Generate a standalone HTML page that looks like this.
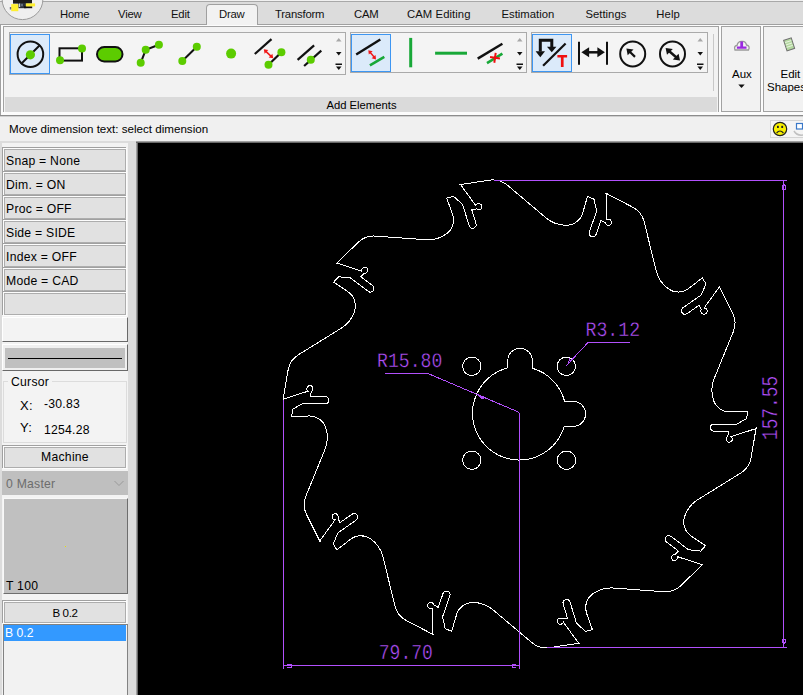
<!DOCTYPE html>
<html>
<head>
<meta charset="utf-8">
<title>CAD</title>
<style>
*{box-sizing:border-box;margin:0;padding:0}
html,body{width:803px;height:695px;overflow:hidden;background:#f0f0f0;font-family:"Liberation Sans",sans-serif;color:#000}
.abs{position:absolute}
#root{position:relative;width:803px;height:695px;overflow:hidden;background:#f0f0f0}
/* tab bar */
#tabbar{left:0;top:0;width:803px;height:25px;background:#dcdcdc;border-bottom:1px solid #a0a0a0;border-top:1px solid #f0f0f0;box-shadow:inset 0 1px 0 #a8a8a8}
.tab{position:absolute;top:7px;font-size:11.3px;letter-spacing:-0.2px;line-height:14px;white-space:nowrap;color:#111}
#drawtab{left:206px;top:4px;width:52px;height:22px;background:#f2f2f2;border:1px solid #a0a0a0;border-bottom:none;border-radius:4px 4px 0 0}
/* ribbon */
#ribbon{left:0;top:25px;width:803px;height:90px;background:#fcfcfc;border-left:1px solid #a0a0a0}
.panel{position:absolute;border:1px solid #a2a2a2;border-bottom:none;background:#f2f2f2}
.gal{position:absolute;border:1px solid #aaaaaa;background:#f4f4f4}
.sel{position:absolute;background:#dbeafa;border:1px solid #3d96f2}
.lbl{position:absolute;background:#dadada;font-size:11.25px;line-height:16px;text-align:center;overflow:hidden;padding-left:1px}
/* left panel */
.btn{position:absolute;left:4px;width:122px;height:22px;border:1px solid #adadad;background:#e1e1e1;font-size:12.2px;letter-spacing:0.25px;line-height:15px;padding:4px 0 0 1px;white-space:nowrap;box-shadow:0 0 0 1px #fdfdfd,-1px -1px 0 1px #a0a0a0}
.t{position:absolute;white-space:nowrap;font-size:12.2px;letter-spacing:0.25px;line-height:15px}
</style>
</head>
<body>
<div id="root">

<!-- TAB BAR -->
<div id="tabbar" class="abs"></div>
<div id="drawtab" class="abs"></div>
<div class="tab" style="left:60px">Home</div>
<div class="tab" style="left:118px">View</div>
<div class="tab" style="left:171px">Edit</div>
<div class="tab" style="left:219px">Draw</div>
<div class="tab" style="left:275px">Transform</div>
<div class="tab" style="left:354px">CAM</div>
<div class="tab" style="left:407px;letter-spacing:0.07px">CAM Editing</div>
<div class="tab" style="left:501.500px;letter-spacing:0">Estimation</div>
<div class="tab" style="left:585.500px;letter-spacing:0">Settings</div>
<div class="tab" style="left:656.300px;letter-spacing:0.07px">Help</div>

<!-- RIBBON -->
<div id="ribbon" class="abs"></div>
<div class="panel" style="left:3px;top:26px;width:716px;height:86px"></div>
<div class="lbl" style="left:5px;top:97px;width:712px;height:15px">Add Elements</div>
<div class="panel" style="left:721px;top:26px;width:40px;height:86px;border-bottom:1px solid #a2a2a2"></div>
<div class="panel" style="left:763px;top:26px;width:60px;height:86px;border-bottom:1px solid #a2a2a2"></div>
<div class="gal" style="left:9px;top:32px;width:337px;height:43px"></div>
<div class="gal" style="left:350px;top:32px;width:177px;height:41px"></div>
<div class="gal" style="left:531px;top:32px;width:177px;height:41px"></div>
<div class="sel" style="left:10px;top:34px;width:40px;height:40px"></div>
<div class="sel" style="left:351px;top:34px;width:40px;height:38px"></div>
<div class="sel" style="left:532px;top:34px;width:40px;height:38px"></div>
<div class="abs" style="left:713px;top:34px;width:1px;height:57px;background:#c8c8c8"></div>
<div class="abs" style="left:0;top:115px;width:803px;height:1px;background:#8c8c8c"></div><div class="abs" style="left:0;top:116px;width:803px;height:1px;background:#cfcfcf"></div>
<div class="abs" style="left:1px;top:112px;width:802px;height:3px;background:#fcfcfc"></div>

<svg class="abs" id="icons" style="left:0;top:0" width="803" height="140" viewBox="0 0 803 140">
<!-- app button -->
<circle cx="22.5" cy="-0.8" r="20.4" fill="#efefef" stroke="#9c9c9c" stroke-width="1"/>
<g>
<rect x="13" y="0" width="19" height="3.600" fill="#1c1c1c"/>
<rect x="18.300" y="3" width="8" height="5.200" fill="#2a3038"/>
<rect x="24" y="6.200" width="8.200" height="2" fill="#111"/>
<rect x="11.200" y="4.100" width="7.100" height="7.100" fill="#fff030"/>
<rect x="25.800" y="3.400" width="9.300" height="3" fill="#fff030"/>
<rect x="19" y="3.500" width="1.200" height="3.500" fill="#c8d4e0"/>
<rect x="21.500" y="3.800" width="1" height="2.500" fill="#9ab"/>
<rect x="9.800" y="7" width="1.400" height="2.500" fill="#667"/>
</g>
<!-- gallery 1 -->
<g fill="none" stroke="#111" stroke-width="2" stroke-linecap="butt">
<circle cx="30.4" cy="54.2" r="12.8"/>
<path d="M21 64 L40 45"/>
<rect x="59.500" y="48.300" width="22.500" height="12.300"/>
<path d="M140.700 62.800 L145.700 49.800 L158.900 44.800"/>
<path d="M182.300 61 L196.800 46.800"/>
<path d="M254.800 54 L271.500 39.100" stroke-width="2.2"/>
<path d="M268.500 64.800 L281.400 52.300" stroke-width="2.2"/>
<path d="M297.600 59.800 L314.100 45.300" stroke-width="2.2"/>
<path d="M304.100 66 L321.300 50.600" stroke-width="2.2"/>
</g>
<rect x="97" y="47" width="25.500" height="14.500" rx="7.250" fill="#5ccc00" stroke="#111" stroke-width="2"/>
<g fill="#5ccc00">
<circle cx="30.400" cy="54.800" r="4.600"/>
<circle cx="82" cy="48.600" r="4"/>
<circle cx="60" cy="60.300" r="4"/>
<circle cx="140.700" cy="62.800" r="4"/>
<circle cx="145.700" cy="49.800" r="4"/>
<circle cx="158.900" cy="44.800" r="4"/>
<circle cx="182.300" cy="61" r="4"/>
<circle cx="196.800" cy="46.800" r="4"/>
<circle cx="231.100" cy="53.600" r="5"/>
<circle cx="268.500" cy="64.800" r="4"/>
<circle cx="281.400" cy="52.300" r="4"/>
<circle cx="310.800" cy="59.800" r="4"/>
</g>
<g stroke="#f01818" stroke-width="1.6" fill="#f01818">
<path d="M265.300 50.800 L271.700 56.800"/>
<path d="M263.800 49.300 L268.300 50 L264.600 53.800 Z" stroke="none"/>
<path d="M273.200 58.300 L268.700 57.600 L272.400 53.800 Z" stroke="none"/>
</g>
<!-- scroll arrows g1 -->
<g fill="#111">
<path d="M336 41.500 L341.500 41.500 L338.750 38 Z" fill="#a8a8a8"/>
<path d="M336 52 L341.500 52 L338.750 55.500 Z"/>
<path d="M335.500 63.500 h6.500 v1.500 h-6.500 Z"/>
<path d="M336 66.500 L341.500 66.500 L338.750 70 Z"/>
<path d="M517 41.500 L522.500 41.500 L519.750 38 Z" fill="#a8a8a8"/>
<path d="M517 52 L522.500 52 L519.750 55.500 Z"/>
<path d="M516.500 63.500 h6.500 v1.500 h-6.500 Z"/>
<path d="M517 66.500 L522.500 66.500 L519.750 70 Z"/>
<path d="M697.500 41.500 L703 41.500 L700.250 38 Z" fill="#a8a8a8"/>
<path d="M697.500 52 L703 52 L700.250 55.500 Z"/>
<path d="M697 63.500 h6.500 v1.500 h-6.500 Z"/>
<path d="M697.500 66.500 L703 66.500 L700.250 70 Z"/>
</g>
<!-- gallery 2 -->
<g fill="none" stroke-width="2.4">
<path d="M356.200 54.400 L380.300 39.400" stroke="#111"/>
<path d="M369.900 65.300 L384.300 56.900" stroke="#18a838" stroke-width="2.6"/>
<path d="M410.700 37.900 L410.700 67.300" stroke="#18a838" stroke-width="3"/>
<path d="M435.100 53.200 L467 53.200" stroke="#18a838" stroke-width="3"/>
<path d="M477.700 58.600 L502.400 43.700" stroke="#111"/>
<path d="M487 63.100 L502.400 53.600" stroke="#18a838" stroke-width="2.6"/>
<path d="M490 57.800 L500 57.800 M495 52.800 L495 62.800 " stroke="#f01010" stroke-width="2" transform="rotate(8 495 57.800)"/>
</g>
<g stroke="#f01818" stroke-width="1.500" fill="#f01818">
<path d="M369.600 51.800 L374.800 57.800"/>
<path d="M368.300 50.200 L372.700 51.300 L368.800 54.600 Z" stroke="none"/>
<path d="M376 59.400 L371.600 58.300 L375.500 55 Z" stroke="none"/>
</g>
<!-- gallery 3 -->
<g fill="none" stroke="#111" stroke-width="2.4">
<path d="M540.300 51.500 L540.300 40.300 L551.800 40.300 L551.800 47" stroke-width="3" stroke-linejoin="miter"/>
<path d="M543.100 65.700 L565.600 43.500" stroke-width="2.2"/>
<path d="M579 41.800 L579 64.800" stroke-width="2"/>
<path d="M607 41.800 L607 64.800" stroke-width="2"/>
<path d="M587 52.300 L600 52.300" stroke-width="2.5"/>
<circle cx="632.700" cy="53.900" r="12.500" stroke-width="2"/>
<circle cx="672.500" cy="53.900" r="12.500" stroke-width="2"/>
<path d="M635 56.900 L629.500 51.500" stroke-width="2.2"/>
<path d="M669 51 L676.500 57.500" stroke-width="2.4"/>
</g>
<g fill="#111">
<path d="M535.600 51.200 L545 51.200 L540.300 57.200 Z"/>
<path d="M547 46.700 L556.400 46.700 L551.800 52.200 Z"/>
<path d="M581.400 52.300 L589.100 47.300 L589.100 57.300 Z"/>
<path d="M604.900 52.300 L597.400 47.300 L597.400 57.300 Z"/>
<path d="M626.400 48.500 L633.500 49.500 L627.700 55.300 Z"/>
<path d="M665.600 48 L672.800 49 L667 54.800 Z"/>
<path d="M680 60.500 L672.800 59.500 L678.600 53.700 Z"/>
</g>
<path d="M557.400 54.900 h9.700 v2.600 h-3.500 v9.400 h-2.700 v-9.400 h-3.500 Z" fill="#f01010"/>
<!-- Aux icon -->
<g>
<path d="M735 50 q-1.500 -4 2 -4.500 q1 -4.500 5 -4 q3.500 -0.500 4.500 3.500 q4 1 2 5 Z" fill="#f4f4f4" stroke="#9a9a9a" stroke-width="1.300"/>
<path d="M740.300 41.500 h2.800 v5 h3.400 v2.300 h-9.600 v-2.300 h3.400 Z" fill="#9a28e0"/>
</g>
<path d="M738.300 84.500 L744.700 84.500 L741.500 88 Z" fill="#111"/>
<!-- Edit shapes icon -->
<g transform="rotate(-18 789 45)">
<rect x="785.300" y="39" width="8" height="11" fill="#b4d8a0" stroke="#707070" stroke-width="1"/>
<path d="M786 41.500 h6.500 M786 44 h6.500 M786 46.500 h6.500" stroke="#e8f4e0" stroke-width="0.900"/>
</g>
<!-- smiley area -->
<rect x="770.500" y="120.500" width="40" height="17" fill="#f4f4f4" stroke="#d4d4d4"/>
<circle cx="780" cy="129" r="6.700" fill="#f8f000" stroke="#222" stroke-width="1.200"/>
<rect x="777" y="125.800" width="1.800" height="2.200" fill="#222"/>
<rect x="781.300" y="125.800" width="1.800" height="2.200" fill="#222"/>
<path d="M776.600 133 Q780 129 783.400 133" fill="none" stroke="#222" stroke-width="1.200"/>
<rect x="796.500" y="123.500" width="6" height="5.500" fill="#fff" stroke="#3a78c8" stroke-width="1.200"/>
<path d="M794 131 q3 5 9 4" fill="none" stroke="#c0c0c0" stroke-width="1.500"/>
</svg>

<div class="t" style="left:732px;top:66.5px;font-size:11.5px;letter-spacing:0">Aux</div>
<div class="t" style="left:780.5px;top:66.5px;font-size:11.5px;letter-spacing:0">Edit</div>
<div class="t" style="left:767px;top:80px;font-size:11.5px;letter-spacing:0">Shapes</div>

<!-- STATUS -->
<div class="t" style="left:9px;top:121px;font-size:11.6px;letter-spacing:0">Move dimension text: select dimension</div>

<!-- LEFT PANEL -->
<div class="abs" style="left:0;top:142px;width:138px;height:553px;background:#f3f3f3"></div>
<div class="abs" style="left:128px;top:141px;width:8px;height:554px;background:#dcdcdc"></div>
<div class="abs" style="left:0;top:141px;width:803px;height:2px;background:#dcdcdc"></div><div class="abs" style="left:0;top:143px;width:2px;height:552px;background:#dcdcdc"></div><div class="abs" style="left:136px;top:141px;width:2px;height:554px;background:#696969;border-left:1px solid #a0a0a0"></div>
<div class="abs" style="left:136px;top:141px;width:667px;height:2px;background:#696969;border-top:1px solid #a0a0a0"></div>

<div class="btn" style="top:149px">Snap = None</div>
<div class="btn" style="top:173px">Dim. = ON</div>
<div class="btn" style="top:197px">Proc = OFF</div>
<div class="btn" style="top:221px">Side = SIDE</div>
<div class="btn" style="top:245px">Index = OFF</div>
<div class="btn" style="top:269px">Mode = CAD</div>
<div class="btn" style="top:293px"></div>

<div class="abs" style="left:2px;top:317px;width:126px;height:25px;background:#f3f3f3;border-right:1px solid #696969;border-bottom:1px solid #696969;border-top:1px solid #fff;border-left:1px solid #fff"></div>
<div class="abs" style="left:2px;top:344px;width:126px;height:27px;background:#f0f0f0;border-right:1px solid #696969;border-bottom:1px solid #696969;border-top:1px solid #fff;border-left:1px solid #fff"></div>
<div class="abs" style="left:5px;top:348px;width:120px;height:20px;background:#c0c0c0"></div>
<div class="abs" style="left:8px;top:358px;width:114px;height:1px;background:#000"></div>

<!-- cursor group -->
<div class="abs" style="left:3px;top:381px;width:124px;height:62px;border:1px solid #dcdcdc"></div>
<div class="t" style="left:8px;top:375px;background:#f3f3f3;padding:0 3px">Cursor</div>
<div class="t" style="left:20px;top:398px;font-size:13px">X:</div>
<div class="t" style="left:44px;top:397px">-30.83</div>
<div class="t" style="left:20px;top:420px;font-size:13px">Y:</div>
<div class="t" style="left:44px;top:423px">1254.28</div>

<div class="btn" style="top:447px;height:21px;text-align:center;padding-left:0;padding-top:2px">Machine</div>
<div class="abs" style="left:2px;top:471px;width:126px;height:24px;background:#bfbfbf"></div>
<div class="t" style="left:6px;top:477px;color:#6d6d6d">0 Master</div>
<svg class="abs" style="left:112px;top:478px" width="14" height="10"><path d="M2.5 3 L7 7.5 L11.5 3" fill="none" stroke="#9a9a9a" stroke-width="1"/></svg>

<div class="abs" style="left:3px;top:498px;width:125px;height:96px;background:#c0c0c0;border-top:1px solid #f8f8f8;border-left:1px solid #f8f8f8;border-right:1px solid #6e6e6e;border-bottom:1px solid #6e6e6e"></div>
<div class="abs" style="left:65px;top:546px;width:1px;height:1px;background:#e8e000"></div>
<div class="t" style="left:6px;top:579px">T 100</div>

<div class="btn" style="top:602px;height:21px;text-align:center;padding-left:0;padding-top:2px;font-size:11.6px;letter-spacing:-0.4px">B 0.2</div>
<div class="abs" style="left:3px;top:624px;width:125px;height:80px;background:#f2f2f2;border:1px solid #828282"></div>
<div class="abs" style="left:4px;top:625px;width:122px;height:16px;background:#3399ff"></div>
<div class="t" style="left:5px;top:626px;color:#fff;font-size:12.2px;letter-spacing:0">B 0.2</div>

<!-- CANVAS -->
<svg class="abs" id="cv" style="left:138px;top:143px;background:#000" width="665" height="552" viewBox="138 143 665 552" shape-rendering="crispEdges">
<defs>
<path id="tooth" fill="none" stroke="#fff" stroke-width="1" d="M459.3 184.7 L489.6 180.2 A22.5 22.5 0 0 1 507.5 185.3 L545.8 217.65 A31.5 31.5 0 0 0 566.36 225.27 A17 17 0 0 0 582.7 213 L587.5 196.4 L594.1 199.3 L596.6 211.1 L589.25 232.35 A3.6 3.6 0 0 0 596.2 234.2 L601 220.4 L605.3 222.8 A3.1 3.1 0 1 0 606.6 219.7 L606.6 193.4"/>
</defs>
<g id="blade">
<use href="#tooth"/>
<use href="#tooth" transform="rotate(36 519.6 413.9)"/>
<use href="#tooth" transform="rotate(72 519.6 413.9)"/>
<use href="#tooth" transform="rotate(108 519.6 413.9)"/>
<use href="#tooth" transform="rotate(144 519.6 413.9)"/>
<use href="#tooth" transform="rotate(180 519.6 413.9)"/>
<use href="#tooth" transform="rotate(216 519.6 413.9)"/>
<use href="#tooth" transform="rotate(252 519.6 413.9)"/>
<use href="#tooth" transform="rotate(288 519.6 413.9)"/>
<use href="#tooth" transform="rotate(324 519.6 413.9)"/>
</g>
<!-- centre hole with keyways -->
<g fill="none" stroke="#fff" stroke-width="1">
<circle cx="471.8" cy="366.3" r="9.2"/>
<circle cx="566.3" cy="366.3" r="9.2"/>
<circle cx="471.8" cy="460.2" r="9.2"/>
<circle cx="566.5" cy="460.2" r="9.2"/>
<path d="M507.7 367.9 L507.7 360.6 A12.3 12.3 0 0 1 532.3 360.6 L532.3 368.2 A46.8 46.8 0 0 1 564.6 401.3 L573 401.3 A12.6 12.6 0 0 1 573 426.5 L564.2 426.5 A46.8 46.8 0 1 1 507.7 367.9 Z"/>
</g>
<!-- dimensions -->
<g fill="none" stroke="#b250fc" stroke-width="1">
<path d="M494 180.500 L787 180.500"/>
<path d="M783.500 180.500 L783.500 647.500"/>
<path d="M547 647.500 L787 647.500"/>
<path d="M283.500 400 L283.500 669"/>
<path d="M519.500 412.500 L519.500 669"/>
<path d="M283.500 665.500 L519.500 665.500"/>
<path d="M385 373.500 L428 373.500 L519.500 412.500"/>
<path d="M630 342.500 L588 342.500 L566 366"/>
<!-- arrows -->
<path d="M284 665.500 L291 664.500 L291 667.500 L287 667.500"/>
<path d="M519 665.500 L512 664.500 L512 667.500 L516 667.500"/>
<path d="M783.500 181 L782.500 189 L785.500 189 L785.500 186 L784 184"/>
<path d="M783.500 647 L782.500 639 L785.500 639 L785.500 642 L784 644"/>
<path d="M477 394.700 L484.500 396.300 L483 399.800 Z" fill="#b250fc" stroke="none"/>
<path d="M567 365 L572 360 M568 364 L570 358"/>
</g>
<g fill="#b250fc" font-family="Liberation Mono, monospace" font-size="20.6" stroke="#000" stroke-width="0.4" shape-rendering="auto" text-rendering="geometricPrecision">
<text transform="translate(377 367.200) scale(0.88 1)">R15.80</text>
<text transform="translate(585.500 336) scale(0.885 1)">R3.12</text>
<text transform="translate(378.800 658.800) scale(0.85 1)" font-size="21.2">79.70</text>
<text transform="translate(776.700 440) rotate(-90) scale(0.795 1)" font-size="22.4">157.55</text>
</g>
</svg>

</div>
</body>
</html>
